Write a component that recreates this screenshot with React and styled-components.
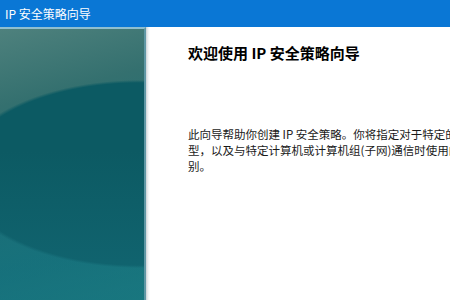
import React from "react";
import styled, { createGlobalStyle } from "styled-components";

const Global = createGlobalStyle`
  html, body { margin: 0; padding: 0; background: #ffffff; }
  body { font-family: "Noto Sans CJK SC", "Noto Sans", sans-serif; overflow: hidden; }
`;

const Window = styled.div`
  width: 450px;
  height: 300px;
  display: flex;
  flex-direction: column;
  overflow: hidden;
  background: #ffffff;
`;

const TitleBar = styled.div`
  height: 27px;
  flex: none;
  background: #0a77d5;
  color: #ffffff;
  font-size: 12px;
  display: flex;
  align-items: center;
  padding-left: 5px;
  box-sizing: border-box;
`;

const Body = styled.div`
  flex: 1;
  display: flex;
  min-height: 0;
`;

const SidePanel = styled.div`
  width: 144px;
  flex: none;
  border-top: 2px solid #8fbfd0;
  border-right: 2px solid #5e97a4;
  background:
    linear-gradient(to bottom, rgba(22, 110, 125, 0) 45%, rgba(22, 112, 126, 0.55) 100%),
    radial-gradient(ellipse 184px 94px at 140px 145px, #0c5a63 97%, rgba(12, 90, 99, 0) 100%),
    linear-gradient(165deg, #4e817d 0%, #34706f 25%, #1e6d74 55%, #17727a 80%, #1c7e80 100%);
`;

const Divider = styled.div`
  width: 4px;
  flex: none;
  background: linear-gradient(to right, #c9d2d6, #eef1f2 50%, #ffffff);
`;

const Content = styled.div`
  flex: 1;
  min-width: 0;
  padding: 16px 0 0 38px;
  overflow: hidden;
  color: #111111;
`;

const Heading = styled.h1`
  margin: 0;
  font-size: 15px;
  font-weight: 700;
  line-height: 20px;
  white-space: nowrap;
  color: #000000;
`;

const Paragraph = styled.p`
  margin: 63px 0 0;
  font-size: 11.5px;
  line-height: 16px;
  color: #1a1a1a;
`;

const Line = styled.span`
  display: block;
  white-space: nowrap;
`;

export default function App() {
  return (
    <>
      <Global />
      <Window>
        <TitleBar>IP 安全策略向导</TitleBar>
        <Body>
          <SidePanel />
          <Divider />
          <Content>
            <Heading>欢迎使用 IP 安全策略向导</Heading>
            <Paragraph>
              <Line>此向导帮助你创建 IP 安全策略。你将指定对于特定的通信类</Line>
              <Line>型，以及与特定计算机或计算机组(子网)通信时使用的安全级</Line>
              <Line>别。</Line>
            </Paragraph>
          </Content>
        </Body>
      </Window>
    </>
  );
}
